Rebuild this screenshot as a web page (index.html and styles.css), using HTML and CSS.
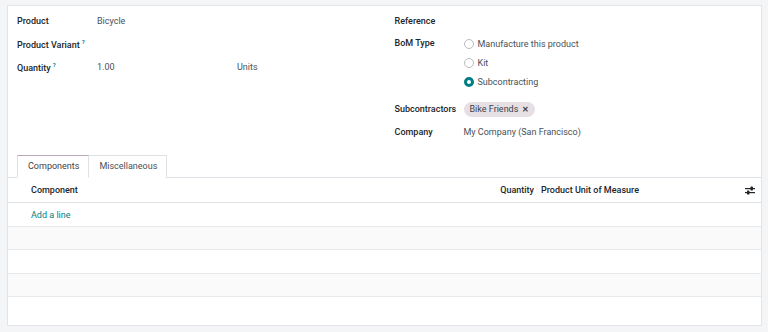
FILE: index.html
```html
<!DOCTYPE html>
<html>
<head>
  <title>Bill of Materials</title>
  <link rel="stylesheet" href="styles.css">
</head>
<body>
  <div class="sheet">
    <div class="form-top">
      <div class="group">
        <div class="row">
          <div class="label">Product</div>
          <div class="value">Bicycle</div>
        </div>
        <div class="row">
          <div class="label">Product Variant<sup class="help">?</sup></div>
          <div class="value"></div>
        </div>
        <div class="row">
          <div class="label">Quantity<sup class="help">?</sup></div>
          <div class="value qty">
            <span class="qty-num">1.00</span>
            <span>Units</span>
          </div>
        </div>
      </div>

      <div class="group right">
        <div class="row">
          <div class="label">Reference</div>
          <div class="value"></div>
        </div>
        <div class="row row-radio">
          <div class="label">BoM Type</div>
          <div class="value radios">
            <label class="radio"><span class="dot"></span>Manufacture this product</label>
            <label class="radio"><span class="dot"></span>Kit</label>
            <label class="radio"><span class="dot checked"></span>Subcontracting</label>
          </div>
        </div>
        <div class="row row-tag">
          <div class="label">Subcontractors</div>
          <div class="value">
            <span class="tag">Bike Friends <span class="tag-x">✕</span></span>
          </div>
        </div>
        <div class="row">
          <div class="label">Company</div>
          <div class="value">My Company (San Francisco)</div>
        </div>
      </div>
    </div>

    <div class="notebook">
      <div class="tabs">
        <div class="tab active">Components</div>
        <div class="tab">Miscellaneous</div>
      </div>

      <table class="lines">
        <thead>
          <tr>
            <th class="col-name">Component</th>
            <th class="col-qty">Quantity</th>
            <th class="col-uom">Product Unit of Measure</th>
            <th class="col-opt">
              <svg width="10" height="9" viewBox="0 0 10 9">
                <rect x="0" y="2" width="10" height="1.2" fill="#212529"/>
                <rect x="5.5" y="0.6" width="2.4" height="4" rx="0.6" fill="#212529"/>
                <rect x="0" y="6" width="10" height="1.2" fill="#212529"/>
                <rect x="2" y="4.6" width="2.4" height="4" rx="0.6" fill="#212529"/>
              </svg>
            </th>
          </tr>
        </thead>
        <tbody>
          <tr class="tall">
            <td colspan="4" class="add-line"><a>Add a line</a></td>
          </tr>
          <tr class="stripe"><td colspan="4"></td></tr>
          <tr class="tall"><td colspan="4"></td></tr>
          <tr class="stripe"><td colspan="4"></td></tr>
        </tbody>
      </table>
      <div class="lines-rest"></div>
    </div>
  </div>
</body>
</html>
```

FILE: styles.css
```css
body {
  margin: 0;
  padding: 0;
  background-color: #f4f5f7;
  font-family: Roboto, "Noto Sans", sans-serif;
  font-size: 9px;
  color: #495057;
}

.sheet {
  margin: 5px 6px 6px 7px;
  height: 321px;
  box-sizing: border-box;
  background-color: #fff;
  border: 1px solid #e2e4e8;
  display: flex;
  flex-direction: column;
}

/* top part of the form */
.form-top {
  display: grid;
  grid-template-columns: 1fr 1fr;
  column-gap: 20px;
  padding: 3px 9px 0 9px;
}

.row {
  display: flex;
  align-items: center;
  min-height: 23px;
}

.label {
  width: 80px;
  flex-shrink: 0;
  font-weight: 500;
  color: #212529;
  white-space: nowrap;
}

.right .label {
  width: 69px;
}

.help {
  color: #017e84;
  font-size: 6px;
  margin-left: 2px;
  font-weight: bold;
}

.qty {
  display: flex;
}

.qty-num {
  width: 140px;
}

.row-radio {
  align-items: flex-start;
  padding-bottom: 7px;
}

.row-radio .label {
  line-height: 23px;
}

.radios {
  display: flex;
  flex-direction: column;
  padding-top: 2px;
}

.radio {
  display: flex;
  align-items: center;
  height: 19px;
}

.dot {
  width: 8px;
  height: 8px;
  border: 1px solid #b8bcc0;
  border-radius: 50%;
  margin-right: 4px;
  box-sizing: content-box;
}

.dot.checked {
  width: 4px;
  height: 4px;
  border: 3px solid #017e84;
}

.row-tag {
  min-height: 22px;
}

.tag {
  display: inline-block;
  background-color: #e6dfe3;
  border-radius: 8px;
  padding: 1px 6px;
  line-height: 13px;
  color: #3d4247;
}

.tag-x {
  font-weight: bold;
  font-size: 8px;
  margin-left: 1px;
}

/* notebook */
.notebook {
  margin-top: 12px;
  flex-grow: 1;
  display: flex;
  flex-direction: column;
}

.tabs {
  display: flex;
  padding-left: 9px;
  border-bottom: 1px solid #dee2e6;
}

.tab {
  padding: 0 9px 0 10px;
  line-height: 21px;
  border: 1px solid #dee2e6;
  border-bottom: none;
  margin-bottom: -1px;
  background-color: #fff;
  color: #495057;
}

.tab.active {
  border-top-color: #b9a8b5;
  border-bottom: 1px solid #fff;
  color: #3d4247;
}

.tab + .tab {
  border-left: none;
}

.lines {
  width: 100%;
  border-collapse: collapse;
}

.lines th {
  height: 24px;
  padding: 0;
  color: #212529;
  font-weight: 500;
  border-bottom: 1px solid #dfe2e6;
}

.col-name {
  text-align: left;
  padding-left: 23px !important;
}

.col-qty {
  width: 80px;
  text-align: right;
  padding-right: 3px !important;
}

.col-uom {
  width: 198px;
  text-align: left;
  padding-left: 4px !important;
}

.col-opt {
  width: 22px;
}

.col-opt svg {
  display: block;
  margin: 0 auto;
}

.lines td {
  height: 22px;
  padding: 0;
  border-bottom: 1px solid #e7e9ec;
}

.lines tr.tall td {
  height: 23px;
}

.stripe td {
  background-color: #fafafa;
}

.lines-rest {
  flex-grow: 1;
}

.add-line {
  padding-left: 23px !important;
}

.add-line a {
  color: #017e84;
  cursor: pointer;
}
```
